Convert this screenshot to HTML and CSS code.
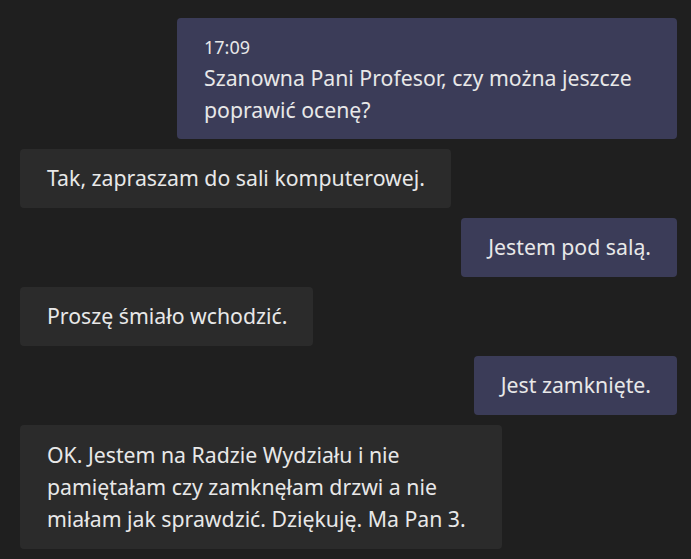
FILE: index.html
```html
<!DOCTYPE html>
<html lang="pl">
<head>
<meta charset="utf-8">
<link rel="stylesheet" href="styles.css">
</head>
<body>
<div class="chat">
  <div class="msg mine wide">
    <div class="time">17:09</div>
    <div class="text">Szanowna Pani Profesor, czy można jeszcze poprawić ocenę?</div>
  </div>
  <div class="msg other">
    <div class="text">Tak, zapraszam do sali komputerowej.</div>
  </div>
  <div class="msg mine">
    <div class="text">Jestem pod salą.</div>
  </div>
  <div class="msg other">
    <div class="text">Proszę śmiało wchodzić.</div>
  </div>
  <div class="msg mine">
    <div class="text">Jest zamknięte.</div>
  </div>
  <div class="msg other long">
    <div class="text">OK. Jestem na Radzie Wydziału i nie pamiętałam czy zamknęłam drzwi a nie miałam jak sprawdzić. Dziękuję. Ma Pan 3.</div>
  </div>
</div>
</body>
</html>
```
FILE: styles.css
```css
html, body {
  margin: 0;
  padding: 0;
  background: #1f1f1f;
}
body {
  width: 691px;
  height: 559px;
  overflow: hidden;
  font-family: "Noto Sans", "Open Sans", sans-serif;
  color: #e8e8e8;
}
.chat {
  display: flex;
  flex-direction: column;
  gap: 10px;
  padding: 18px 14px 0 20px;
}
.msg {
  box-sizing: border-box;
  border-radius: 4px;
  padding: 13px 26px 14px 27px;
  font-size: 21.25px;
  line-height: 32px;
}
.mine {
  align-self: flex-end;
  background: #3b3c58;
}
.other {
  align-self: flex-start;
  background: #2b2b2b;
}
.wide {
  width: 500px;
  padding-top: 14px;
  padding-bottom: 13px;
}
.long {
  width: 482px;
  padding-top: 14px;
  padding-bottom: 14px;
}
.time {
  font-size: 18px;
  line-height: 30px;
}
```
